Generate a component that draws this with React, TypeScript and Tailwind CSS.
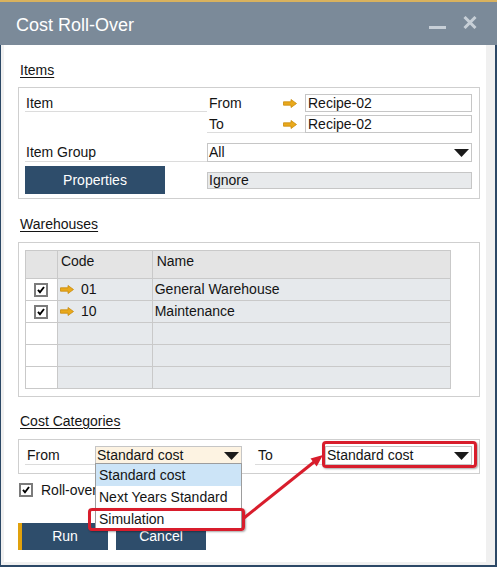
import React from "react";

const ArrowIcon = () => (
  <svg width="14" height="9" viewBox="0 0 14 9" className="block">
    <path d="M0.5 2.8H8V0.5L13.5 4.5L8 8.5V6.2H0.5Z" fill="#e9a91c" stroke="#c98a0a" strokeWidth="0.8" />
  </svg>
);

const Tri = () => (
  <svg width="15" height="8" viewBox="0 0 15 8" className="block">
    <polygon points="0,0 15,0 7.5,8" fill="#1a1a1a" />
  </svg>
);

const Check = () => (
  <div className="w-[14px] h-[14px] border-2 border-[#7b7b7b] bg-white flex items-center justify-center">
    <svg width="8" height="8" viewBox="0 0 8 8" className="block">
      <path d="M1 3.8L3 6.3L7 1" stroke="#000" strokeWidth="1.9" fill="none" />
    </svg>
  </div>
);

const SectionLabel = ({ children, mt }: { children: React.ReactNode; mt: string }) => (
  <div className={`${mt} pl-[2px] leading-[17px] underline underline-offset-2`}>{children}</div>
);

export default function App() {
  return (
    <div className="relative w-[497px] h-[567px] flex flex-col overflow-hidden font-['Liberation_Sans',Arial,sans-serif] text-[14px] text-[#141414]">
      {/* Title bar */}
      <div className="h-[45px] shrink-0 bg-[#7b8a99] border-t-2 border-[#d9b25e] flex items-center pl-[16px] pr-[20px]">
        <span className="flex-1 text-white text-[18px] leading-none pt-[3px]">Cost Roll-Over</span>
        <div className="w-[17px] h-[3px] bg-[#c7cfd7] mt-[7px]" />
        <svg width="14" height="13" viewBox="0 0 14 13" className="block ml-[17px] mb-[2px]">
          <path d="M1.5 1L12.5 12M12.5 1L1.5 12" stroke="#c7cfd7" strokeWidth="3" />
        </svg>
      </div>

      {/* Body */}
      <div className="flex-1 flex bg-[#f0f0f0] border-l border-r-2 border-b-2 border-[#2c4866] pl-[3px] pr-[9px] pb-[3px]">
        <div className="flex-1 bg-white pl-[14px] pt-[17px] flex flex-col">
          <SectionLabel mt="mt-0">Items</SectionLabel>

          {/* Items panel */}
          <div className="mt-[8px] w-[462px] h-[112px] border border-[#cfcfcf] pt-[6px] pl-[6px] flex flex-col">
            <div className="flex h-[18px]">
              <div className="w-[182px] border-b border-[#dcdcdc] pl-[1px] pt-[1px] flex items-center">Item</div>
              <div className="w-[98px] flex items-center pt-[1px]">
                <span className="w-[76px] pl-[2px]">From</span>
                <ArrowIcon />
              </div>
              <div className="w-[167px] h-[18px] border border-[#c6c6c6] pl-[2px] flex items-center">Recipe-02</div>
            </div>
            <div className="flex h-[18px] mt-[3px]">
              <div className="w-[182px]" />
              <div className="w-[98px] flex items-center border-b border-[#dcdcdc] pt-[1px]">
                <span className="w-[76px] pl-[2px]">To</span>
                <ArrowIcon />
              </div>
              <div className="w-[167px] h-[18px] border border-[#c6c6c6] pl-[2px] flex items-center">Recipe-02</div>
            </div>
            <div className="flex h-[19px] mt-[10px]">
              <div className="w-[182px] border-b border-[#dcdcdc] pl-[1px] pt-[1px] flex items-center">Item Group</div>
              <div className="w-[265px] border border-[#c6c6c6] pl-[1px] pr-[2px] flex items-center">
                <span className="flex-1">All</span>
                <Tri />
              </div>
            </div>
            <div className="flex h-[28px] mt-[4px] items-center">
              <div className="w-[140px] h-[28px] bg-[#2e4d6b] text-white flex items-center justify-center">Properties</div>
              <div className="ml-[42px] w-[265px] h-[17px] bg-[#e8eaec] border border-[#c6c6c6] pl-[1px] flex items-center">Ignore</div>
            </div>
          </div>

          <SectionLabel mt="mt-[17px]">Warehouses</SectionLabel>

          {/* Warehouses panel */}
          <div className="mt-[9px] w-[462px] h-[155px] border border-[#cfcfcf] pt-[7px] pl-[6px]">
            <div className="w-[426px] border-t border-l border-[#c9c9c9]">
              <div className="flex h-[28px] bg-[#e4e4e4]">
                <div className="w-[32px] border-r border-b border-[#c9c9c9]" />
                <div className="w-[95px] border-r border-b border-[#c9c9c9] pl-[3px] leading-[20px]">Code</div>
                <div className="w-[299px] border-r border-b border-[#c9c9c9] pl-[4px] leading-[20px]">Name</div>
              </div>
              {[
                { c: "01", n: "General Warehouse" },
                { c: "10", n: "Maintenance" },
                null,
                null,
                null,
              ].map((r, i) => (
                <div key={i} className="flex h-[22px]">
                  <div className="w-[32px] bg-white border-r border-b border-[#c9c9c9] flex items-center justify-center">
                    {r && <Check />}
                  </div>
                  <div className="w-[95px] bg-[#e6e9ec] border-r border-b border-[#c9c9c9] pl-[2px] flex items-center">
                    {r && (
                      <>
                        <ArrowIcon />
                        <span className="ml-[7px]">{r.c}</span>
                      </>
                    )}
                  </div>
                  <div className="w-[299px] bg-[#e6e9ec] border-r border-b border-[#c9c9c9] pl-[2px] flex items-center">
                    {r && r.n}
                  </div>
                </div>
              ))}
            </div>
          </div>

          <SectionLabel mt="mt-[16px]">Cost Categories</SectionLabel>

          {/* Cost categories panel */}
          <div className="mt-[9px] w-[462px] h-[35px] border border-[#cfcfcf] pt-[6px] pl-[6px] flex items-start">
            <div className="w-[70px] h-[19px] border-b border-[#dcdcdc] pl-[2px] flex items-center">From</div>
            <div className="w-[147px] h-[19px] bg-[#fdf3e2] border border-[#c6c6c6] pl-[1px] pr-[2px] flex items-center">
              <span className="flex-1">Standard cost</span>
              <Tri />
            </div>
            <div className="ml-[13px] w-[70px] h-[19px] border-b border-[#dcdcdc] pl-[3px] flex items-center">To</div>
            <div className="w-[147px] h-[19px] bg-white border border-[#c6c6c6] pl-[1px] pr-[2px] flex items-center">
              <span className="flex-1">Standard cost</span>
              <Tri />
            </div>
          </div>

          <div className="mt-[9px] h-[14px] flex items-center ml-[1px]">
            <Check />
            <span className="ml-[8px] w-[54px] overflow-hidden whitespace-nowrap">Roll-over Cost Category</span>
          </div>

          <div className="mt-[26px] flex">
            <div className="w-[90px] h-[27px] bg-[#2e4d6b] border-l-4 border-[#e0a10d] text-white flex items-center justify-center">Run</div>
            <div className="ml-[8px] w-[90px] h-[27px] bg-[#2e4d6b] text-white flex items-center justify-center">Cancel</div>
          </div>
        </div>
      </div>

      {/* Dropdown list overlay */}
      <div className="absolute left-[95px] top-[463px] w-[147px] h-[68px] bg-white border border-[#9d9d9d] flex flex-col">
        <div className="h-[22px] bg-[#cce4f7] pl-[3px] flex items-center">Standard cost</div>
        <div className="h-[22px] pl-[3px] flex items-center">Next Years Standard</div>
        <div className="h-[22px] pl-[3px] flex items-center">Simulation</div>
      </div>

      {/* Red annotation boxes */}
      <div className="absolute left-[88px] top-[508px] w-[157px] h-[23px] border-[3px] border-[#d81d2c] rounded-[4px] shadow-[1px_1px_2px_rgba(0,0,0,0.35)]" />
      <div className="absolute left-[322px] top-[441px] w-[155px] h-[27px] border-[3px] border-[#d81d2c] rounded-[4px] shadow-[1px_1px_2px_rgba(0,0,0,0.35)]" />

      {/* Red arrow */}
      <svg className="absolute left-0 top-0 pointer-events-none" width="497" height="567" viewBox="0 0 497 567">
        <line x1="244" y1="518" x2="314" y2="462" stroke="#d81d2c" strokeWidth="3" />
        <polygon points="323,455 316.7,466.4 310.5,458.6" fill="#d81d2c" />
      </svg>
    </div>
  );
}
